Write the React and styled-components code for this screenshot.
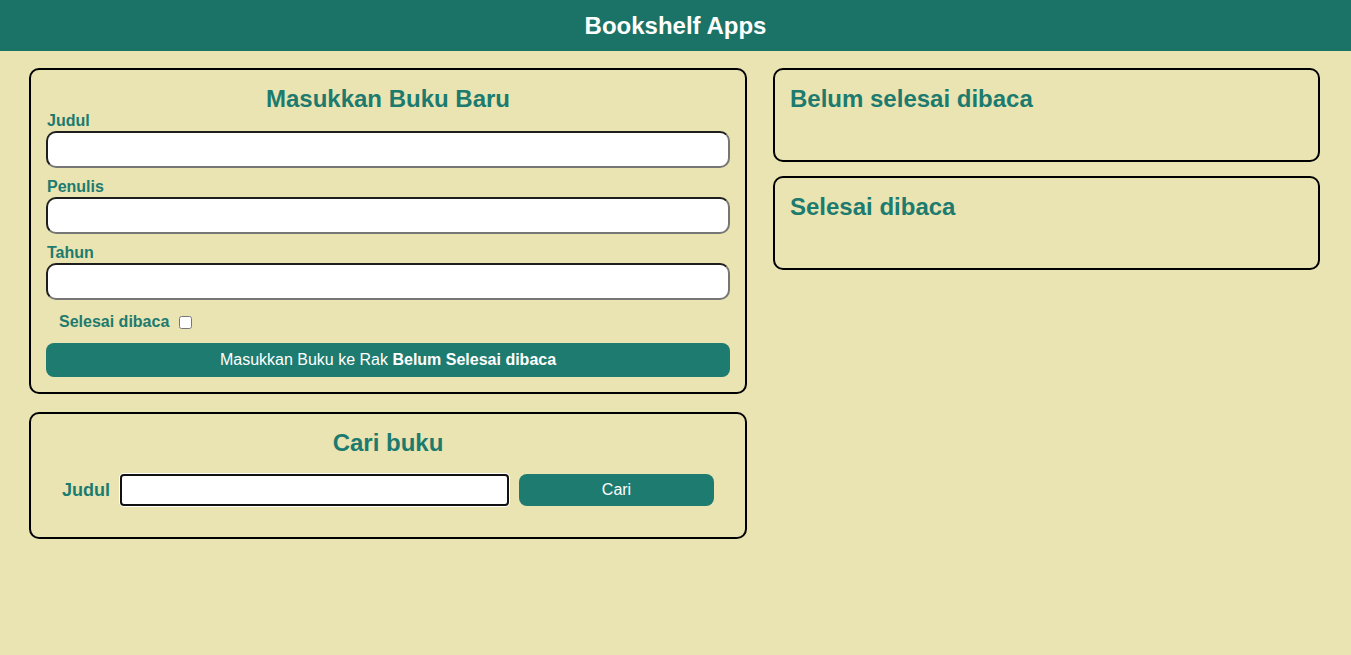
import styled, { createGlobalStyle } from "styled-components";

const GlobalStyle = createGlobalStyle`
  * {
    margin: 0;
    padding: 0;
    box-sizing: border-box;
    font-family: "Liberation Sans", Arial, sans-serif;
  }
  body {
    background-color: #eae4b2;
    min-height: 655px;
  }
`;

const HeadBar = styled.header`
  height: 51px;
  display: flex;
  align-items: center;
  justify-content: center;
  background-color: #1b7367;
  color: #fff;

  h1 {
    font-size: 24px;
    font-weight: 700;
  }
`;

const Main = styled.main`
  display: grid;
  grid-template-columns: 718px 547px;
  column-gap: 26px;
  align-items: start;
  padding: 17px 29px;
`;

const Column = styled.div`
  display: flex;
  flex-direction: column;
  gap: ${(props) => props.gap || "18px"};
`;

const Card = styled.section`
  display: flex;
  flex-direction: column;
  border: 2px solid #000;
  border-radius: 10px;
  padding: 16px 15px 15px;
  min-height: ${(props) => props.minHeight || "auto"};
`;

const Title = styled.h2`
  font-size: 24px;
  line-height: 26px;
  font-weight: 700;
  color: #1c7b6e;
  text-align: ${(props) => (props.left ? "left" : "center")};
`;

const Label = styled.label`
  display: block;
  font-size: 16px;
  line-height: 18px;
  font-weight: 700;
  color: #1c7b6e;
  padding-left: 1px;
  margin-top: ${(props) => (props.first ? "0" : "10px")};
  margin-bottom: 1px;
`;

const TextInput = styled.input`
  display: block;
  height: 37px;
  width: 100%;
  background: #fff;
  border: 2px solid;
  border-color: #1e1e1e #767676 #767676 #1e1e1e;
  border-radius: 10px;
  padding: 0 8px;
  font-size: 16px;
  outline: none;
`;

const CheckRow = styled.div`
  display: flex;
  align-items: center;
  gap: 10px;
  height: 20px;
  margin: 12px 0 11px;
  padding-left: 13px;

  label {
    font-size: 16px;
    font-weight: 700;
    color: #1c7b6e;
  }

  input {
    width: 13px;
    height: 13px;
    margin: 0;
  }
`;

const SubmitButton = styled.button`
  display: block;
  height: ${(props) => props.height || "34px"};
  width: ${(props) => props.width || "100%"};
  border: none;
  border-radius: 8px;
  background-color: #1e7b70;
  color: #fff;
  font-size: 16px;
  cursor: pointer;

  b {
    font-weight: 700;
  }
`;

const SearchForm = styled.form`
  display: flex;
  align-items: center;
  justify-content: center;
  gap: 10px;
  margin: 18px 0 16px;

  label {
    font-size: 18px;
    font-weight: 700;
    color: #1c7b6e;
  }
`;

const SearchInput = styled.input`
  width: 389px;
  height: 32px;
  background: #fff;
  border: 2px solid #111;
  border-radius: 4px;
  box-shadow: 0 0 0 1px #fff;
  padding: 0 6px;
  font-size: 16px;
  outline: none;
`;

const App = () => {
  return (
    <>
      <GlobalStyle />
      <HeadBar>
        <h1>Bookshelf Apps</h1>
      </HeadBar>
      <Main>
        <Column>
          <Card>
            <Title>Masukkan Buku Baru</Title>
            <form id="inputBook" onSubmit={(e) => e.preventDefault()}>
              <Label first htmlFor="inputBookTitle">
                Judul
              </Label>
              <TextInput id="inputBookTitle" type="text" />
              <Label htmlFor="inputBookAuthor">Penulis</Label>
              <TextInput id="inputBookAuthor" type="text" />
              <Label htmlFor="inputBookYear">Tahun</Label>
              <TextInput id="inputBookYear" type="number" />
              <CheckRow>
                <label htmlFor="inputBookIsComplete">Selesai dibaca</label>
                <input id="inputBookIsComplete" type="checkbox" />
              </CheckRow>
              <SubmitButton type="submit">
                Masukkan Buku ke Rak <b>Belum Selesai dibaca</b>
              </SubmitButton>
            </form>
          </Card>
          <Card>
            <Title>Cari buku</Title>
            <SearchForm id="searchBook" onSubmit={(e) => e.preventDefault()}>
              <label htmlFor="searchBookTitle">Judul</label>
              <SearchInput id="searchBookTitle" type="text" />
              <SubmitButton type="submit" width="195px" height="32px">
                Cari
              </SubmitButton>
            </SearchForm>
          </Card>
        </Column>
        <Column gap="14px">
          <Card minHeight="94px">
            <Title left>Belum selesai dibaca</Title>
          </Card>
          <Card minHeight="94px">
            <Title left>Selesai dibaca</Title>
          </Card>
        </Column>
      </Main>
    </>
  );
};

export default App;
